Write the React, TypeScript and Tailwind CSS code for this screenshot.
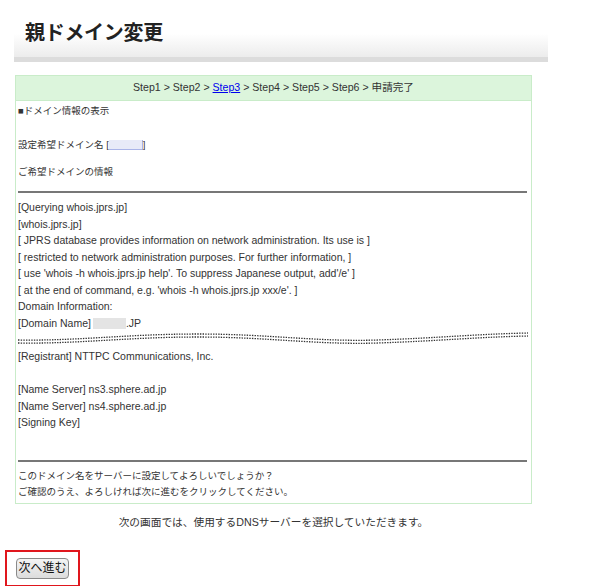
const whoisLines = [
  "[Querying whois.jprs.jp]",
  "[whois.jprs.jp]",
  "[ JPRS database provides information on network administration. Its use is ]",
  "[ restricted to network administration purposes. For further information, ]",
  "[ use 'whois -h whois.jprs.jp help'. To suppress Japanese output, add'/e' ]",
  "[ at the end of command, e.g. 'whois -h whois.jprs.jp xxx/e'. ]",
  "Domain Information:",
];

const font = { fontFamily: '"Liberation Sans", "Noto Sans CJK JP", sans-serif' };

function Wave() {
  const d = "M0 8 C60 9 110 2 180 2 S300 10 360 8 S460 2 510 1";
  return (
    <svg width="510" height="14" viewBox="0 0 510 14" className="block">
      <path d={d} fill="none" stroke="#333" strokeWidth="1.3" strokeDasharray="1.4 1.2" />
      <path d={d} transform="translate(0 3)" fill="none" stroke="#333" strokeWidth="1.3" strokeDasharray="1.4 1.2" />
    </svg>
  );
}

export default function App() {
  return (
    <div className="w-[600px] h-[586px] bg-white text-[#333] overflow-hidden" style={font}>
      <div className="pt-[10px] pl-[14px]">
        <div className="w-[534px] h-[52px] bg-gradient-to-b from-white via-white to-[#ececec] border-b-[5px] border-[#dcdcdc] pl-[11px] pt-[10px]">
          <h1 className="text-[20px] font-semibold text-[#222] leading-[26px] tracking-[-0.3px]">親ドメイン変更</h1>
        </div>
      </div>

      <div className="ml-[15px] mt-[13px] w-[517px] border border-[#c9ecc9]">
        <div className="h-[25px] bg-[#dcf5dc] border-b border-[#c9ecc9] flex items-center justify-center text-[10.6px]">
          Step1 &gt; Step2 &gt;&nbsp;<span className="text-[#0000ee] underline">Step3</span>&nbsp;&gt; Step4 &gt; Step5 &gt; Step6 &gt; 申請完了
        </div>
        <div className="px-[2px] pt-[2px] pb-[2px] text-[9.5px] leading-[16.5px]">
          <p>■ドメイン情報の表示</p>
          <p className="mt-[17.5px] flex items-center">
            設定希望ドメイン名 [<span className="inline-block w-[34px] h-[10px] bg-[#e8eaf8] border-b border-r border-[#aab4e8]" />]
          </p>
          <p className="mt-[10.5px]">ご希望ドメインの情報</p>
          <div className="mt-[10px] mr-[2px] border-t-2 border-[#777]" />
          <div className="mt-[6.75px] text-[10.5px]">
            {whoisLines.map((l, i) => (
              <p key={i}>{l}</p>
            ))}
            <p className="flex items-center">
              [Domain Name]<span className="inline-block w-[33px] h-[11px] bg-[#e4e4e4] ml-[2px]" />.JP
            </p>
          </div>
          <div className="mt-[1px] h-[16px]">
            <Wave />
          </div>
          <div className="text-[10.5px]">
            <p>[Registrant] NTTPC Communications, Inc.</p>
            <p>&nbsp;</p>
            <p>[Name Server] ns3.sphere.ad.jp</p>
            <p>[Name Server] ns4.sphere.ad.jp</p>
            <p>[Signing Key]</p>
          </div>
          <div className="mt-[29px] mr-[2px] border-t-2 border-[#777]" />
          <p className="mt-[5.75px]">このドメイン名をサーバーに設定してよろしいでしょうか？</p>
          <p>ご確認のうえ、よろしければ次に進むをクリックしてください。</p>
        </div>
      </div>

      <p className="w-[547px] text-center text-[10.7px] mt-[10px] leading-[16px]">
        次の画面では、使用するDNSサーバーを選択していただきます。
      </p>

      <div className="ml-[5px] mt-[20px] w-[75px] h-[37px] border-2 border-[#e0161d] flex items-center justify-center">
        <button className="w-[53px] h-[21px] rounded-[4px] border border-[#8a8a8a] bg-gradient-to-b from-[#f4f4f4] to-[#dcdcdc] text-[12px] text-[#111] leading-none">
          次へ進む
        </button>
      </div>
    </div>
  );
}
